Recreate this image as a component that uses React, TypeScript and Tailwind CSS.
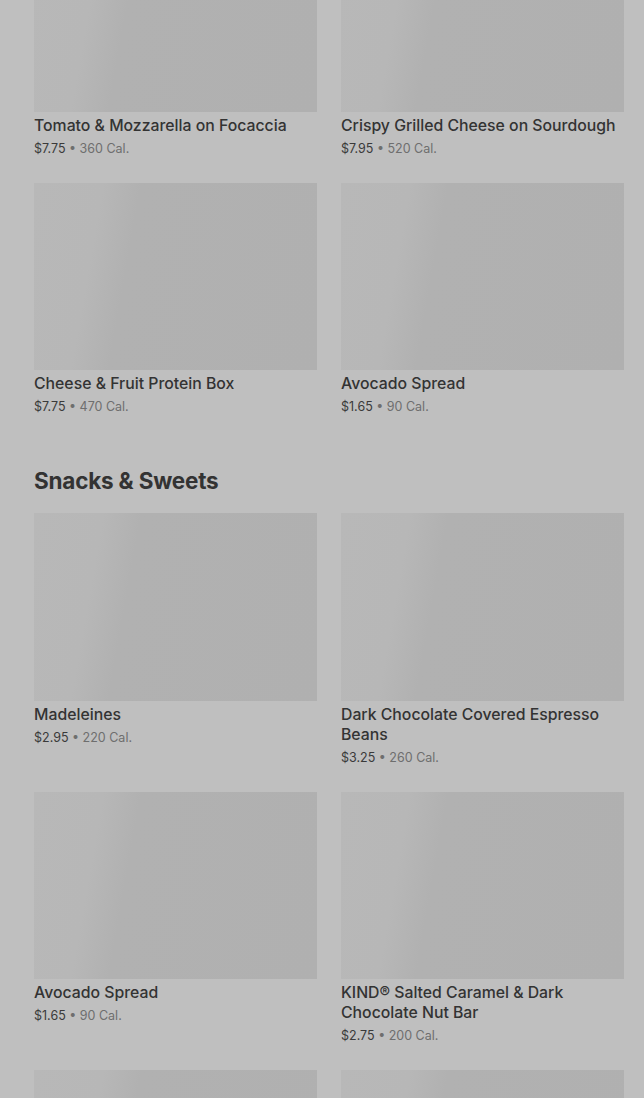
import type { ReactNode } from "react";

type Item = { name: string; price: string; cal: string };

const lunch: Item[] = [
  { name: "Tomato & Mozzarella on Focaccia", price: "$7.75", cal: "360 Cal." },
  { name: "Crispy Grilled Cheese on Sourdough", price: "$7.95", cal: "520 Cal." },
  { name: "Cheese & Fruit Protein Box", price: "$7.75", cal: "470 Cal." },
  { name: "Avocado Spread", price: "$1.65", cal: "90 Cal." },
];

const snacks: Item[] = [
  { name: "Madeleines", price: "$2.95", cal: "220 Cal." },
  { name: "Dark Chocolate Covered Espresso Beans", price: "$3.25", cal: "260 Cal." },
  { name: "Avocado Spread", price: "$1.65", cal: "90 Cal." },
  { name: "KIND® Salted Caramel & Dark Chocolate Nut Bar", price: "$2.75", cal: "200 Cal." },
  { name: "Chocolate Chip Cookie", price: "$2.45", cal: "380 Cal." },
  { name: "Kettle Sea Salt Chips", price: "$1.95", cal: "220 Cal." },
];

function MenuCard({ item }: { item: Item }) {
  return (
    <div className="flex flex-col">
      <div className="h-[187.5px] w-full bg-[linear-gradient(100deg,#b8b8b8_0%,#b7b7b7_22%,#b1b1b1_34%,#b0b0b0_100%)]" />
      <p className="mt-1 text-[15.8px] leading-[20px] font-medium text-[#333333]">{item.name}</p>
      <p className="mt-[3px] text-[12.5px] leading-[20px] text-[#3a3a3a]">
        {item.price} <span className="text-[#6e6e6e]">• {item.cal}</span>
      </p>
    </div>
  );
}

function Grid({ children, className = "" }: { children: ReactNode; className?: string }) {
  return <div className={`grid grid-cols-2 gap-x-6 gap-y-6 ${className}`}>{children}</div>;
}

export default function App() {
  return (
    <div className="bg-[#bfbfbf] pb-10 font-['Inter','Liberation_Sans',sans-serif]">
      <div className="pl-[34px] pr-[20px]">
        <Grid className="mt-[-76px]">
          {lunch.map((item, i) => (
            <MenuCard key={i} item={item} />
          ))}
        </Grid>

        <h2 className="mt-[50px] text-[22.5px] leading-[28px] font-bold tracking-[-0.2px] text-[#333333]">
          Snacks &amp; Sweets
        </h2>

        <Grid className="mt-[18px]">
          {snacks.map((item, i) => (
            <MenuCard key={i} item={item} />
          ))}
        </Grid>
      </div>
    </div>
  );
}
